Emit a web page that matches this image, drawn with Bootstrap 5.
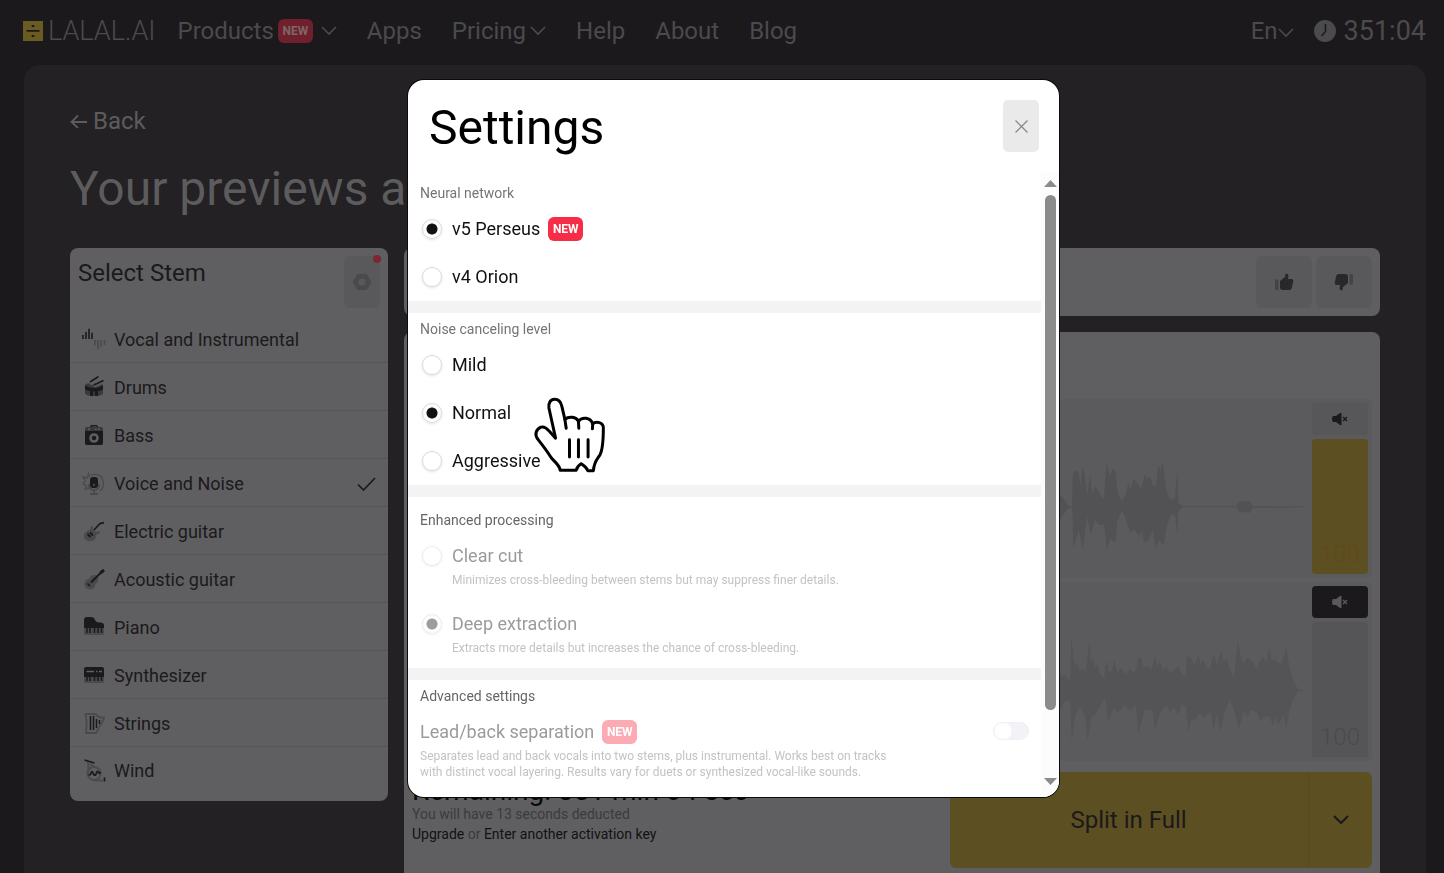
<!DOCTYPE html>
<html lang="en">
<head>
<meta charset="utf-8">
<meta name="viewport" content="width=device-width, initial-scale=1">
<title>LALAL.AI – Settings</title>
<link href="https://cdn.jsdelivr.net/npm/bootstrap@5.3.0/dist/css/bootstrap.min.css" rel="stylesheet">
<style>
  :root { --ink: #1b191c; --surface: #5f5f61; --sunken: #5b5b5d; --muted: #4a494b; --gold: #5c4f21; }
  body { background: var(--ink); color: var(--ink); font-family: Roboto, "Liberation Sans", sans-serif; font-size: 18px; line-height: 24px; height: 100vh; overflow: hidden; }
  a { color: inherit; text-decoration: none; }
  svg { display: block; flex: none; }
  .topbar { height: 65px; padding: 0 18px 3px 23px; color: #4b4a4c; font-size: 24px; }
  .main-links { gap: 30px; margin-left: 22px; }
  .wordmark { font-weight: 300; font-size: 27px; gap: 5px; }
  .minutes { font-size: 27px; gap: 8px; }
  .tag-new { background: #f72c46; color: #fff; border-radius: 6px; width: 35px; height: 24px; font-size: 12px; line-height: 24px; font-weight: 700; text-align: center; flex: none; }
  .topbar .tag-new { background: #70202c; color: #7d6668; }
  .page-panel { background: #232123; border-radius: 16px; margin: 0 18px 0 24px; padding: 40px 46px 0; height: calc(100vh - 65px); overflow: hidden; border-bottom-left-radius: 0; border-bottom-right-radius: 0; }
  .back-link { color: #5c5b5d; font-size: 24px; line-height: 32px; gap: 6px; }
  .page-title { color: #5c5b5d; font-size: 48px; line-height: 56px; font-weight: 400; margin: 24px 0 31px; white-space: nowrap; overflow: hidden; }
  .tile { background: var(--surface); border-radius: 8px; }
  .stems { width: 318px; padding-bottom: 6px; flex: none; }
  .stems-head { height: 67px; padding: 8px; }
  .tile h2 { font-size: 24px; line-height: 34px; margin: 0; font-weight: 400; }
  .square-btn { background: #59595b; border: 0; border-radius: 6px; height: 52px; width: 56px; padding: 0; display: flex; align-items: center; justify-content: center; position: relative; }
  .slim-btn { width: 36px; }
  .alert-dot { position: absolute; top: -1px; right: -1px; width: 8px; height: 8px; border-radius: 50%; background: #7d2632; }
  .stem-list .list-group-item { background: transparent; color: var(--ink); border: 0; border-bottom: 1px solid #565658; height: 48px; padding: 2px 12px 0; display: flex; align-items: center; gap: 8px; border-radius: 0; }
  .stem-list .list-group-item:last-child { border-bottom: 0; padding-top: 0; }
  .work { gap: 16px; }
  .rating { height: 68px; padding: 8px; gap: 4px; }
  .mixer { padding: 8px; min-height: 600px; }
  .mixer-head { height: 59px; }
  .track { background: var(--sunken); border-radius: 6px; padding: 4px; height: 179px; gap: 8px; }
  .wave { margin-top: 46px; fill: #525254; }
  .second .wave { fill: #545456; }
  .track-side { width: 56px; gap: 4px; }
  .mute { height: 32px; background: #575759; color: var(--ink); border: 0; border-radius: 4px; padding: 0; display: flex; align-items: center; justify-content: center; }
  .mute.is-muted { background: var(--ink); color: #59595b; }
  .level { background: var(--gold); color: #62491a; border-radius: 4px; font-size: 24px; line-height: 24px; font-weight: 300; padding-bottom: 8px; }
  .second .level { background: #555557; color: #4b4b4d; }
  .mix-foot { margin-top: 11px; }
  .mix-foot h2 { font-size: 28px; line-height: 32px; color: #0a090a; padding-top: 3px; margin-bottom: -3px; }
  .mix-foot p { font-size: 14px; line-height: 20px; margin: 0; color: #3b3a3c; }
  .mix-foot p a { color: #121113; }
  .split-group { width: 422px; height: 96px; }
  .split-group .btn { --bs-btn-bg: var(--gold); --bs-btn-color: var(--ink); font-size: 24px; border: 0; border-radius: 6px; }
  .split-group .btn-main { padding-right: 14px; }
  .split-group .btn-more { flex: 0 0 64px; border-left: 1px solid #564a1e; padding: 0; display: flex; align-items: center; justify-content: center; }

  .settings-layer { padding-left: 23px; overflow: hidden; }
  .settings-layer .modal-dialog { max-width: 651px; margin: 80px auto 0; }
  .settings-layer .modal-content { border: 0; border-radius: 16px; overflow: hidden; height: calc(100vh - 156px); box-shadow: 0 0 0 1px #0b0a0c; color: #111; }
  .settings-head { padding: 20px 20px 16px 21px; }
  .settings-head h1 { font-size: 48px; line-height: 56px; margin: 0; font-weight: 400; color: #000; }
  .close-btn { background: #eaeaea; border: 0; border-radius: 5px; width: 36px; height: 52px; padding: 0; display: flex; align-items: center; justify-content: center; }
  .settings-scroll { min-height: 0; overflow: hidden; }
  .settings-scroll form { padding-top: 9px; }
  .opt-group { padding: 4px 12px 0; }
  .opt-group + .opt-group { border-top: 12px solid #f3f3f3; }
  .opt-group.first-group { padding-top: 0; }
  .opt-group.roomy { padding-top: 11px; }
  .opt-group legend { font-size: 14px; line-height: 24px; color: #757575; margin: 0; float: left; width: 100%; }
  .opt-group.is-off legend { color: #666; }
  .opt { clear: both; padding: 12px 0; display: flex; align-items: flex-start; cursor: pointer; }
  .opt input[type=radio] { appearance: none; width: 20px; height: 20px; margin: 2px 10px 0 2px; border: 1px solid #d9dbde; border-radius: 50%; background: #fff; box-shadow: 0 1px 3px #0000001f; flex: none; }
  .opt input[type=radio]:checked { background: radial-gradient(circle, #141214 5px, #fff 6px); }
  .opt input[type=radio]:disabled { border-color: #ececee; box-shadow: 0 1px 3px #00000010; }
  .opt input[type=radio]:checked:disabled { background: radial-gradient(circle, #9d9d9d 5px, #fff 6px); }
  .opt-name { display: flex; align-items: center; gap: 8px; }
  .is-off .opt-name { color: #9b9b9b; gap: 8px; }
  .opt-note { display: block; font-size: 12px; line-height: 16px; color: #c3c3c3; margin-top: 4px; }
  .is-off .tag-new { background: #fcaab4; }
  .wide-note { max-width: 490px; }
  .switch-input.form-check-input { width: 36px; height: 18px; margin: 2px 0 0; background-color: #f3f3f7; border-color: #f0f0f4; border-radius: 9px; opacity: 1; float: none;
    background-image: radial-gradient(circle, #fff 8px, transparent 9px); background-size: 18px 18px; background-position: left center; background-repeat: no-repeat; }
  .rail { width: 18px; background: #fcfcfc; padding: 8px 0 12px; }
  .rail-thumb { width: 11px; height: 515px; border-radius: 6px; background: #8b8b8b; margin: 8px 0 auto; flex: 0 1 auto; }
  .pointer { position: absolute; left: 125px; top: 317px; pointer-events: none; }
</style>
</head>
<body>

<header class="topbar d-flex align-items-center">
  <a class="wordmark d-flex align-items-center" href="#">
    <svg width="20" height="20" viewBox="0 0 20 20"><path fill="#6a5b22" d="M0 0h20v20H0z"/><path fill="#1b191c" d="M3.500 9h13v1.700h-13zM8.700 4h2.600v2H8.700zM8.700 14h2.600v2H8.700z"/></svg>
    <span>LALAL.AI</span>
  </a>
  <nav class="main-links d-flex align-items-center" aria-label="Main">
    <a class="d-flex align-items-center" href="#">Products<span class="tag-new ms-1">NEW</span>
      <svg class="ms-2" width="16" height="10" viewBox="0 0 16 10" fill="none" stroke="currentColor" stroke-width="1.600"><path d="M1 1l7 7 7-7"/></svg></a>
    <a href="#">Apps</a>
    <a class="d-flex align-items-center" href="#">Pricing
      <svg class="ms-1" width="16" height="10" viewBox="0 0 16 10" fill="none" stroke="currentColor" stroke-width="1.600"><path d="M1 1l7 7 7-7"/></svg></a>
    <a href="#">Help</a>
    <a href="#">About</a>
    <a href="#">Blog</a>
  </nav>
  <a class="d-flex align-items-center ms-auto" href="#">En
    <svg class="mt-1" width="16" height="10" viewBox="0 0 16 10" fill="none" stroke="currentColor" stroke-width="1.600"><path d="M1 1l7 7 7-7"/></svg></a>
  <a class="minutes d-flex align-items-center ms-3 ps-1" href="#">
    <svg width="22" height="22" viewBox="0 0 22 22"><circle cx="11" cy="11" r="11" fill="#4b4a4c"/><path d="M11.500 4v7.500L7.500 16" fill="none" stroke="#1b191c" stroke-width="1.500"/></svg>
    <span>351:04</span>
  </a>
</header>

<main class="page-panel">
  <a class="back-link d-inline-flex align-items-center" href="#">
    <svg width="17" height="14" viewBox="0 0 17 14" fill="none" stroke="currentColor" stroke-width="1.800"><path d="M17 8H2M8 1.500L1.500 8 8 14"/></svg>Back</a>
  <div class="page-title">Your previews are ready</div>

  <div class="d-flex align-items-start gap-3">
    <section class="stems tile">
      <div class="stems-head d-flex justify-content-between">
        <h2>Select Stem</h2>
        <button class="square-btn slim-btn" type="button" aria-label="Settings">
          <svg width="18" height="16" viewBox="0 0 18 16"><path fill="#4a494b" fill-rule="evenodd" d="M5 0h8l1 .6L18 7v2l-4 6.400-1 .6H5l-1-.6L0 9V7L4 .6zM9 4.500a3.500 3.500 0 100 7 3.500 3.500 0 000-7z"/></svg>
          <span class="alert-dot"></span>
        </button>
      </div>
      <div class="stem-list list-group list-group-flush">
        <a class="list-group-item" href="#"><svg width="24" height="24" viewBox="0 0 24 24" fill="none" stroke-width="1.600"><path stroke="#1b191c" d="M1 7v4M4 4v7M7 .7V11M10 4.700V11"/><path stroke="#4a494b" d="M13 12v5.500M16 12v9.500M19 12v7M22.500 12v5"/></svg>Vocal and Instrumental</a>
        <a class="list-group-item" href="#"><svg width="24" height="24" viewBox="0 0 24 24"><path fill="#39383a" d="M3 9q0-2 9-2t9 2v8q0 3-9 3t-9-3z"/><path fill="#1b191c" d="M3 9.500q9 5 18 0v4q-9 4-18 0zM8 15l3 .5V20H8zM13 15.500l3-.5v5h-3z"/><path stroke="#5f5f61" stroke-width="3.500" d="M8 8l8-4.500M12 10l9-4"/><path stroke="#1b191c" stroke-width="1.600" d="M8 6l8.500-5.500M12 9l9.500-4.500"/></svg>Drums</a>
        <a class="list-group-item" href="#"><svg width="24" height="24" viewBox="0 0 24 24"><path fill="#1b191c" fill-rule="evenodd" d="M8 3q0-2 2-2h4q2 0 2 2h-1.500l-.5-.6h-4l-.5.6z"/><rect x="3" y="3" width="18" height="18" rx="2" fill="#39383a"/><path fill="#1b191c" d="M3 7h18v12q0 2-2 2H5q-2 0-2-2z"/><path fill="#5f5f61" d="M6 4.500h2v1.500H6zM13 4.500h1.500v1.500H13zM16 4.500h1.500v1.500H16z"/><circle cx="12" cy="14" r="3.500" fill="none" stroke="#5f5f61" stroke-width="2.600"/></svg>Bass</a>
        <a class="list-group-item" href="#" aria-current="true"><svg width="24" height="24" viewBox="0 0 24 24" fill="none" stroke="#4a494b" stroke-width="1.300"><path d="M9 3q11-3 12.500 8 0 5-3.500 8M8 5L6.500 1.500 5.500 6 1 5l2.500 4L1 12l3.500 1.500L3 17l4-1"/><path stroke-width="2" d="M7 12q0 6 5 6t5-6M12 18v3.500M8 22h8"/><rect x="8" y="5" width="8" height="11" rx="3" fill="#1b191c" stroke="none"/><path stroke="#5f5f61" d="M12 12v2"/></svg>Voice and Noise
          <svg class="ms-auto" width="19" height="14" viewBox="0 0 19 14" fill="none" stroke="#1b191c" stroke-width="1.700"><path d="M1 7.500L6.500 13 18 1"/></svg></a>
        <a class="list-group-item" href="#"><svg width="24" height="24" viewBox="0 0 24 24"><path fill="#4a494b" d="M3 13q2-3 5-3l1-4 2 0 0 3 3 3 4-1 0 2-4 2q0 6-5 6-3 1-6-2-2-3 0-6z"/><path fill="none" stroke="#1b191c" stroke-width="1.800" d="M12 10l6-6.500 4-.8M5.500 14l3 3M8 12.500l3 3"/></svg>Electric guitar</a>
        <a class="list-group-item" href="#"><svg width="24" height="24" viewBox="0 0 24 24"><circle cx="8" cy="16" r="5.500" fill="#4a494b"/><circle cx="12" cy="11.500" r="4.500" fill="#4a494b"/><path fill="none" stroke="#1b191c" stroke-width="2" d="M9 14.500L20 3.500"/><path fill="none" stroke="#1b191c" stroke-width="3" d="M18.500 5L22 2"/><path stroke="#1b191c" stroke-width="1.600" d="M5.500 15.500l2.500 2.500"/></svg>Acoustic guitar</a>
        <a class="list-group-item" href="#"><svg width="24" height="24" viewBox="0 0 24 24"><path fill="#4a494b" d="M2 11h20v7q0 1-1 1H3q-1 0-1-1z"/><path fill="#1b191c" d="M2 4q0-3 3-3h4q3 0 4 3 1 2.500 5 2.500 4 0 4 3V12H2z"/><path stroke="#1b191c" stroke-width="1.500" d="M5 12v5M8 12v5M12.500 12v5M16 12v5M19.500 12v5"/></svg>Piano</a>
        <a class="list-group-item" href="#"><svg width="24" height="24" viewBox="0 0 24 24"><path fill="#4a494b" d="M2 11h20v7q0 1-1 1H3q-1 0-1-1z"/><path fill="#1b191c" d="M2 5q0-2 2-2h16q2 0 2 2v8H2z"/><path stroke="#1b191c" stroke-width="1.500" d="M5 12v5M8 12v5M12.500 12v5M16 12v5M19.500 12v5"/><path stroke="#5f5f61" stroke-width="1.500" d="M4.500 7.500H12M14 7.500h1.500M17 7.500h3"/></svg>Synthesizer</a>
        <a class="list-group-item" href="#"><svg width="24" height="24" viewBox="0 0 24 24"><path fill="none" stroke="#4a494b" stroke-width="1.800" d="M3.500 2h8q3 0 4 2 2 2 6.500 1.500 0 3-3 6.500l-5 9H4q1.500-9-.5-19z"/><path stroke="#1b191c" stroke-width="1.500" d="M8.500 4v14M11.500 4v14M14.500 7v9M17.500 8v4"/></svg>Strings</a>
        <a class="list-group-item" href="#"><svg width="24" height="24" viewBox="0 0 24 24" fill="none"><circle cx="12" cy="14.500" r="6.500" stroke="#4a494b" stroke-width="2"/><path stroke="#4a494b" stroke-width="2" d="M6 3q1 6 0 11M8 5l5 3M12 21.500h9"/><path stroke="#1b191c" stroke-width="1.700" d="M2.500 1l10 3M22.500 18.500v4M6.500 15.500q2 1 2.500-1.500 1-3 2 0t2.500 2q1-1 1-2.500 1-2.500 2 0 1 1.500 2-.5"/></svg>Wind</a>
      </div>
    </section>

    <div class="work d-flex flex-column flex-grow-1">
      <section class="rating tile d-flex justify-content-end">
        <button class="square-btn" type="button" aria-label="Like"><svg width="20" height="18" viewBox="0 0 20 18"><path fill="#444345" d="M1 6.500h3.500V17H2q-1 0-1-1z"/><path fill="#29272a" d="M6 8l5-4 .5-3q2.500-1 3 1.500L14 6h3.500q2 0 1.800 2l-1.500 7q-.5 2-2.500 2H9q-3 0-3-2.500z"/></svg></button>
        <button class="square-btn" type="button" aria-label="Dislike"><svg width="20" height="18" viewBox="0 0 20 18"><path fill="#444345" d="M15.500 1H18q1 0 1 1v9.500h-3.500z"/><path fill="#29272a" d="M14 10l-5 4-.5 3q-2.500 1-3-1.500L6 12H2.500q-2 0-1.800-2l1.500-7q.5-2 2.500-2H11q3 0 3 2.500z"/></svg></button>
      </section>

      <section class="mixer tile">
        <div class="mixer-head"></div>
        <div class="d-flex flex-column gap-1">
          <div class="track d-flex justify-content-end">
            <svg class="wave" width="260" height="116" viewBox="42 358 780 348"><path d="M42 515L90 497 100 505 115 530 126 530 128 440 135 425 145 425 152 470 157 408 165 440 172 500 180 433 187 495 195 470 210 490 215 505 222 505 230 398 240 440 250 415 257 430 263 490 275 515 287 495 295 458 300 485 310 447 322 460 333 478 345 433 352 448 360 440 368 468 378 468 385 405 392 420 398 393 408 480 420 510 435 505 441 425 445 520 458 530 620 530 625 518 640 514 660 514 668 530 822 530V533L668 535 660 550 645 546 627 550 622 533 458 533 445 545 441 612 436 560 425 553 410 590 400 648 388 630 377 655 368 600 355 635 343 638 335 600 330 622 312 600 300 610 285 560 275 545 262 575 255 640 240 625 231 665 222 585 208 585 195 570 182 615 172 560 158 660 147 600 130 655 127 534 115 534 90 570 42 545z"/></svg>
            <div class="track-side d-flex flex-column">
              <button class="mute" type="button" aria-label="Mute"><svg width="16" height="12" viewBox="0 0 16 12"><path fill="currentColor" d="M1 3h3l4-3h1.500v12H8L4 9H1q-1-1-1-3t1-3z"/><path stroke="currentColor" stroke-width="1.400" d="M11 4l4 4M15 4l-4 4"/></svg></button>
              <div class="level flex-grow-1 d-flex align-items-end justify-content-center">100</div>
            </div>
          </div>
          <div class="track second d-flex justify-content-end">
            <svg class="wave" width="260" height="116" viewBox="42 187 780 348"><path d="M42 310L90 310 95 320 104 315 112 328 121 330 124 195 130 270 138 285 143 280 150 308 158 295 167 310 172 270 177 215 183 275 190 265 195 295 202 285 210 310 222 328 229 270 236 305 246 305 254 270 262 310 275 295 285 315 300 298 308 310 320 300 322 268 333 262 340 292 352 290 365 300 374 260 382 290 390 278 400 300 410 290 420 312 435 298 445 290 455 312 467 325 470 260 483 262 495 292 505 250 512 285 520 270 530 298 540 298 552 252 560 290 573 242 580 275 590 270 600 298 613 325 617 270 624 215 634 272 642 280 652 265 665 272 680 298 690 275 700 262 708 280 718 235 725 272 735 270 745 280 755 280 769 235 778 290 790 335 805 360 822 360V363L805 364 790 388 778 425 769 475 760 440 745 465 735 440 730 470 718 440 705 440 690 455 683 430 665 420 652 440 640 425 627 480 615 430 600 390 585 425 571 485 560 430 551 485 541 425 520 445 508 430 495 450 483 450 475 490 468 410 455 405 445 435 430 410 420 430 410 405 390 430 375 480 368 420 345 420 325 490 318 405 300 425 285 405 262 430 250 415 235 455 225 385 210 410 195 435 185 440 173 515 165 435 150 410 135 440 125 515 121 390 105 395 90 420 42 410z"/></svg>
            <div class="track-side d-flex flex-column">
              <button class="mute is-muted" type="button" aria-label="Unmute"><svg width="16" height="12" viewBox="0 0 16 12"><path fill="currentColor" d="M1 3h3l4-3h1.500v12H8L4 9H1q-1-1-1-3t1-3z"/><path stroke="currentColor" stroke-width="1.400" d="M11 4l4 4M15 4l-4 4"/></svg></button>
              <div class="level flex-grow-1 d-flex align-items-end justify-content-center">100</div>
            </div>
          </div>
        </div>
        <div class="mix-foot d-flex justify-content-between">
          <div>
            <h2>Remaining: 351 min 04 sec</h2>
            <p>You will have 13 seconds deducted</p>
            <p><a href="#">Upgrade</a> or <a href="#">Enter another activation key</a></p>
          </div>
          <div class="split-group btn-group">
            <button class="btn btn-main" type="button">Split in Full</button>
            <button class="btn btn-more" type="button" aria-label="More options"><svg width="16" height="10" viewBox="0 0 16 10" fill="none" stroke="currentColor" stroke-width="2"><path d="M1 1l7 7 7-7"/></svg></button>
          </div>
        </div>
      </section>
    </div>
  </div>
</main>

<div class="modal d-block settings-layer" tabindex="-1" role="dialog" aria-labelledby="settings-title">
  <div class="modal-dialog">
    <div class="modal-content">
      <div class="settings-head d-flex justify-content-between align-items-start">
        <h1 id="settings-title">Settings</h1>
        <button class="close-btn" type="button" aria-label="Close"><svg width="13" height="13" viewBox="0 0 13 13" stroke="#8a8a8a" stroke-width="1.300"><path d="M.5.5l12 12M12.500.5l-12 12"/></svg></button>
      </div>
      <div class="d-flex flex-grow-1 settings-scroll">
        <form class="flex-grow-1">
          <fieldset class="opt-group first-group">
            <legend>Neural network</legend>
            <label class="opt"><input type="radio" name="network" checked><span class="opt-name">v5 Perseus <span class="tag-new">NEW</span></span></label>
            <label class="opt"><input type="radio" name="network"><span class="opt-name">v4 Orion</span></label>
          </fieldset>
          <fieldset class="opt-group">
            <legend>Noise canceling level</legend>
            <label class="opt"><input type="radio" name="noise"><span class="opt-name">Mild</span></label>
            <label class="opt"><input type="radio" name="noise" checked><span class="opt-name">Normal</span></label>
            <label class="opt"><input type="radio" name="noise"><span class="opt-name">Aggressive</span></label>
          </fieldset>
          <fieldset class="opt-group roomy is-off" disabled>
            <legend>Enhanced processing</legend>
            <label class="opt"><input type="radio" name="processing"><span><span class="opt-name">Clear cut</span><span class="opt-note">Minimizes cross-bleeding between stems but may suppress finer details.</span></span></label>
            <label class="opt"><input type="radio" name="processing" checked><span><span class="opt-name">Deep extraction</span><span class="opt-note">Extracts more details but increases the chance of cross-bleeding.</span></span></label>
          </fieldset>
          <fieldset class="opt-group is-off" disabled>
            <legend>Advanced settings</legend>
            <label class="opt justify-content-between"><span><span class="opt-name">Lead/back separation<span class="tag-new">NEW</span></span><span class="opt-note wide-note">Separates lead and back vocals into two stems, plus instrumental. Works best on tracks with distinct vocal layering. Results vary for duets or synthesized vocal-like sounds.</span></span>
              <input class="form-check-input switch-input" type="checkbox" role="switch"></label>
          </fieldset>
        </form>
        <div class="rail d-flex flex-column align-items-center" aria-hidden="true">
          <svg width="13" height="7" viewBox="0 0 13 7"><path fill="#8b8b8b" d="M6.500 0L13 7H0z"/></svg>
          <div class="rail-thumb"></div>
          <svg width="13" height="7" viewBox="0 0 13 7"><path fill="#8b8b8b" d="M0 0h13L6.500 7z"/></svg>
        </div>
      </div>
      <svg class="pointer" width="73" height="77" viewBox="400 680 220 230" fill="#fff" stroke="#000" stroke-width="9" stroke-linejoin="round" stroke-linecap="round" aria-hidden="true">
        <path d="M468 803L448 712C446 696 453 686 465 686 477 686 484 694 487 707L496 746C508 736 530 738 537 752 548 738 573 740 580 760 590 750 612 756 612 772 612 810 610 840 601 855 592 868 584 874 582 901H565C562 890 552 885 545 880 538 884 532 892 530 900H482C480 884 470 880 455 862 440 838 432 828 416 808 402 792 410 776 424 770 434 766 442 774 448 781z"/>
        <path fill="none" d="M496 746L500 773M537 752L538 773M580 760L579 775M510 808V860M537 808V860M566 808V860"/>
      </svg>
    </div>
  </div>
</div>

<script src="https://cdn.jsdelivr.net/npm/bootstrap@5.3.0/dist/js/bootstrap.bundle.min.js"></script>
</body>
</html>
